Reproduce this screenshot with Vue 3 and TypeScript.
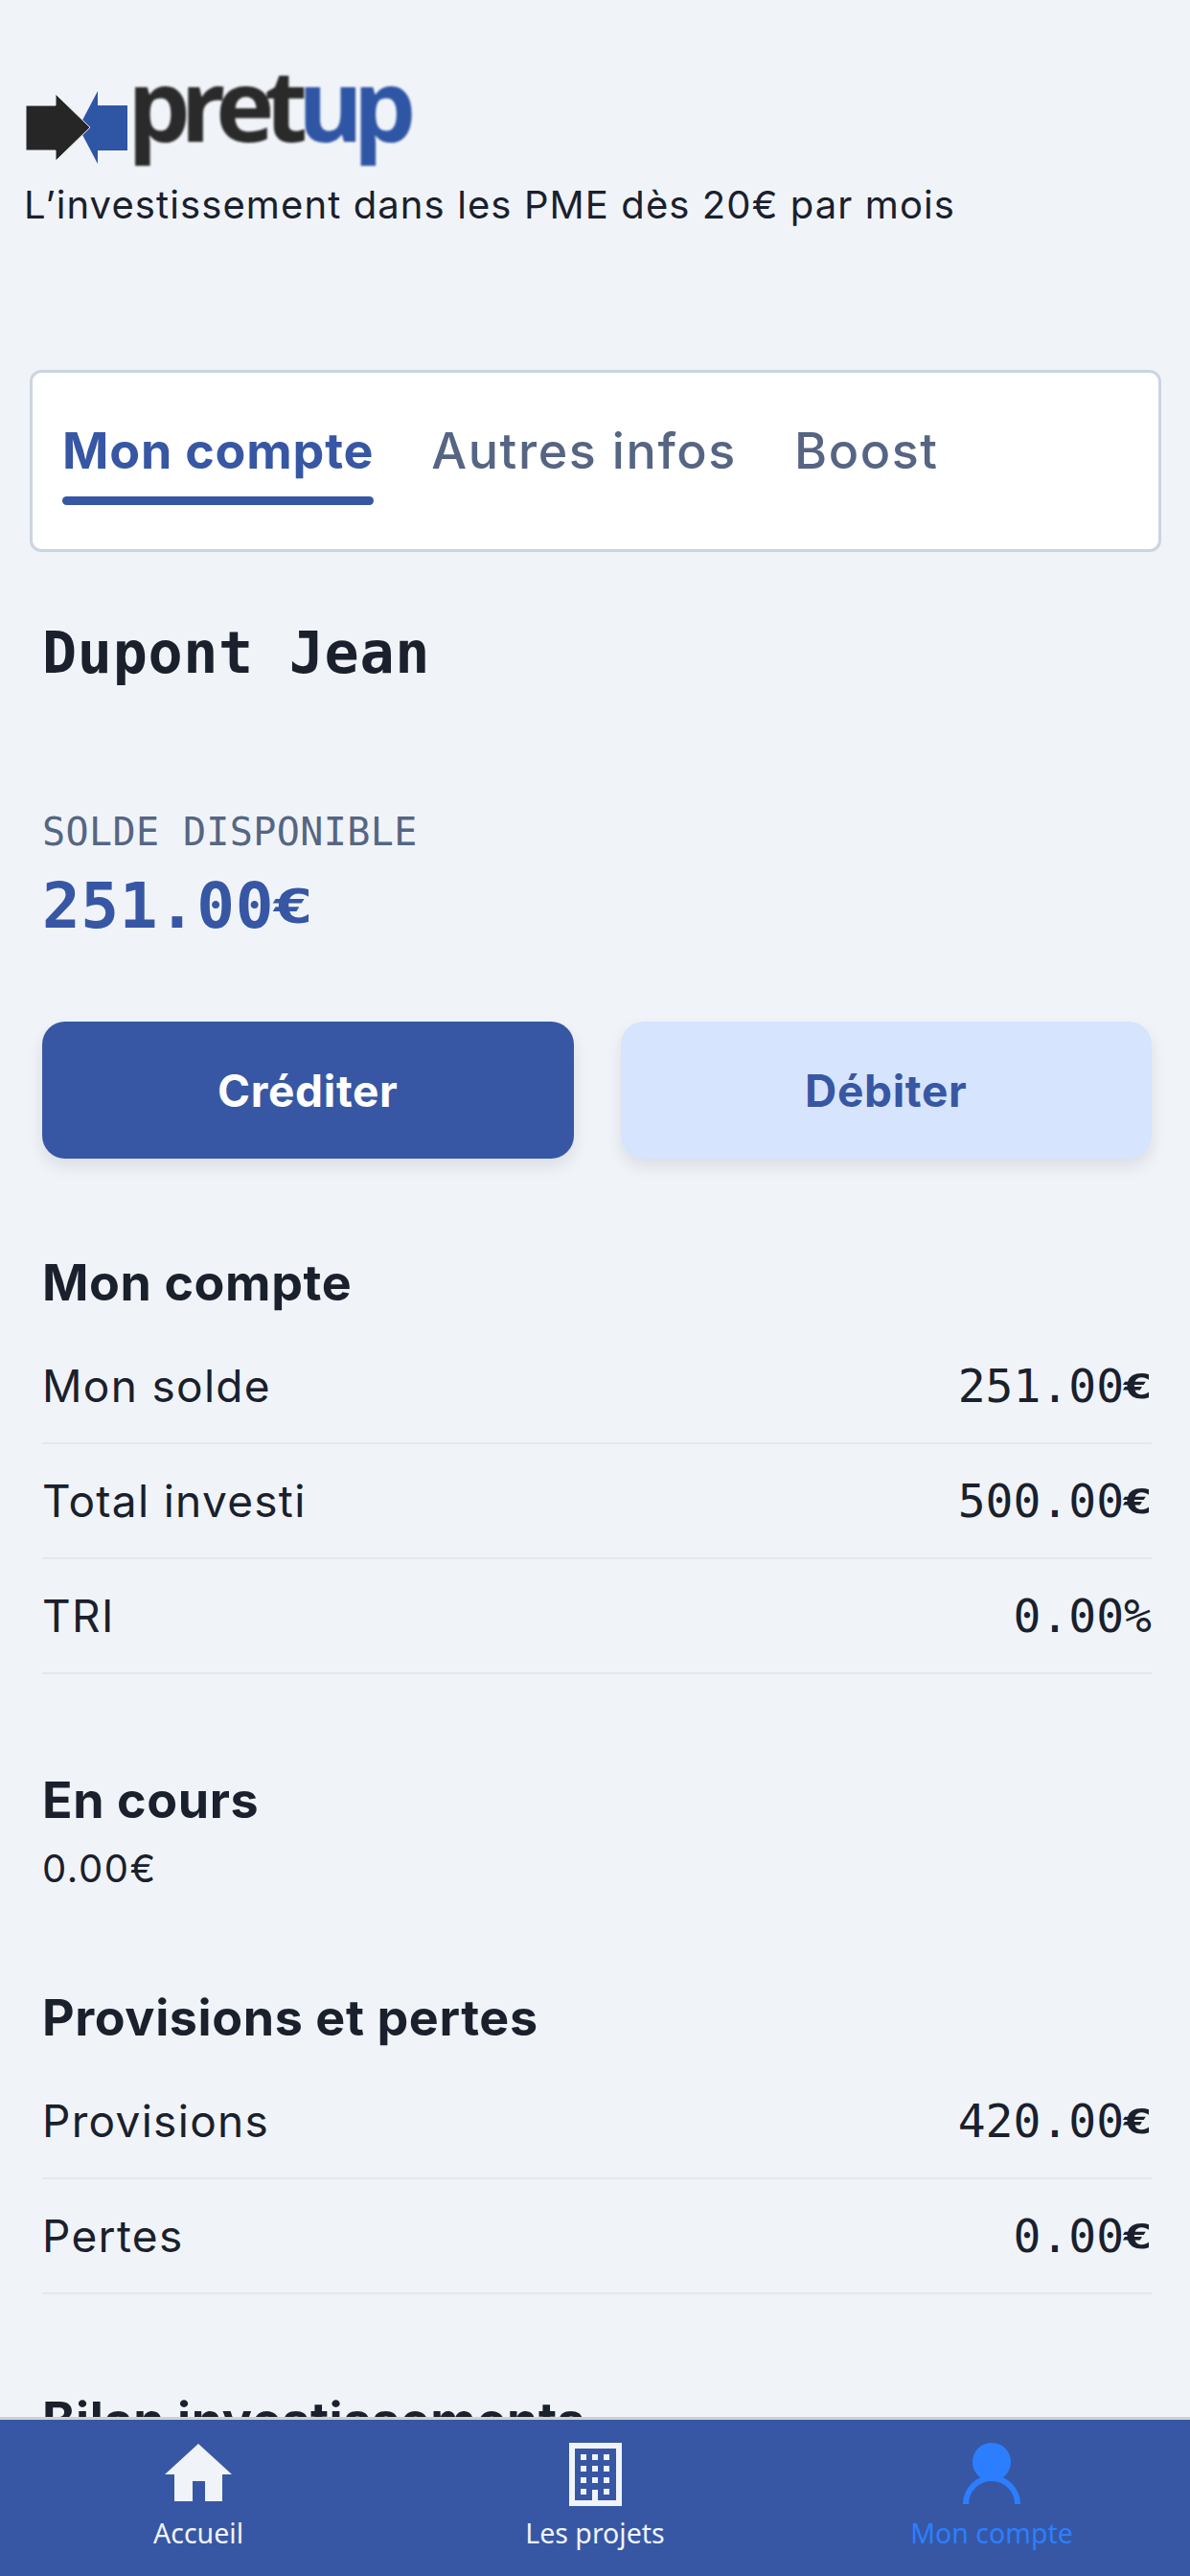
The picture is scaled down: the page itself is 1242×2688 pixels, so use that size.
<script setup lang="ts">
import { ref } from 'vue'

interface AccountRow {
  label: string
  amount: string
  unit: string
}

const tabs = ['Mon compte', 'Autres infos', 'Boost']
const activeTab = ref('Mon compte')

const accountRows: AccountRow[] = [
  { label: 'Mon solde', amount: '251.00', unit: '€' },
  { label: 'Total investi', amount: '500.00', unit: '€' },
  { label: 'TRI', amount: '0.00', unit: '%' },
]

const provisionRows: AccountRow[] = [
  { label: 'Provisions', amount: '420.00', unit: '€' },
  { label: 'Pertes', amount: '0.00', unit: '€' },
]

const windows = [
  [12, 12], [24, 12], [36, 12],
  [12, 24], [24, 24], [36, 24],
  [12, 36], [24, 36], [36, 36],
  [12, 48], [36, 48],
]
</script>

<template>
  <div class="page">
    <header class="brand">
      <div class="logo">
        <svg class="logo-arrows" width="106" height="76" viewBox="0 0 106 76">
          <path d="M106 15H75V0L55 38l20 38V62h31z" fill="#2f55a5" />
          <path d="M0 15h31V3l36 35-36 35V62H0z" fill="#262626" stroke="#f0f4f9" stroke-width="1" />
        </svg>
        <span class="logo-word">pret<span class="logo-up">up</span></span>
      </div>
      <p class="tagline">L’investissement dans les PME dès 20€ par mois</p>
    </header>

    <nav class="tabs">
      <a
        v-for="tab in tabs"
        :key="tab"
        class="tab"
        :class="{ active: tab === activeTab }"
        @click="activeTab = tab"
      >
        {{ tab }}
      </a>
    </nav>

    <main class="content">
      <h1 class="owner">Dupont Jean</h1>

      <p class="balance-label">SOLDE DISPONIBLE</p>
      <p class="balance-value">251.00<span class="unit">€</span></p>

      <div class="actions">
        <button type="button" class="btn btn-primary">Créditer</button>
        <button type="button" class="btn btn-soft">Débiter</button>
      </div>

      <h2 class="section-title first">Mon compte</h2>
      <ul class="rows">
        <li v-for="row in accountRows" :key="row.label" class="row">
          <span class="row-label">{{ row.label }}</span>
          <span class="row-value">{{ row.amount }}<span :class="{ unit: row.unit === '€' }">{{ row.unit }}</span></span>
        </li>
      </ul>

      <h2 class="section-title">En cours</h2>
      <p class="pending">0.00€</p>

      <h2 class="section-title">Provisions et pertes</h2>
      <ul class="rows">
        <li v-for="row in provisionRows" :key="row.label" class="row">
          <span class="row-label">{{ row.label }}</span>
          <span class="row-value">{{ row.amount }}<span class="unit">{{ row.unit }}</span></span>
        </li>
      </ul>

      <h2 class="section-title">Bilan investissements</h2>
    </main>

    <footer class="bottom-nav">
      <a class="nav-item">
        <span class="nav-icon">
          <svg class="icon-home" width="70" height="60" viewBox="0 0 70 60">
            <path d="M35 0l35 32H60v28H42V39H29v21H10V32H0z" fill="#f0f4f9" />
          </svg>
        </span>
        <span class="nav-label">Accueil</span>
      </a>
      <a class="nav-item">
        <span class="nav-icon">
          <svg width="55" height="66" viewBox="0 0 55 66">
            <rect x="3" y="3" width="49" height="60" fill="none" stroke="#f0f4f9" stroke-width="6" />
            <rect v-for="w in windows" :key="`${w[0]}-${w[1]}`" :x="w[0]" :y="w[1]" width="6" height="6" fill="#f0f4f9" />
            <rect x="24" y="49" width="6" height="12" fill="#f0f4f9" />
          </svg>
        </span>
        <span class="nav-label">Les projets</span>
      </a>
      <a class="nav-item current">
        <span class="nav-icon">
          <svg width="60" height="64" viewBox="0 0 60 64">
            <circle cx="30" cy="20" r="20" fill="#2b7fff" />
            <path d="M3 64a27 27 0 0 1 54 0" fill="none" stroke="#2b7fff" stroke-width="6" />
          </svg>
        </span>
        <span class="nav-label">Mon compte</span>
      </a>
    </footer>
  </div>
</template>

<style scoped>
.page {
  height: 100vh;
  overflow: hidden;
  background: #f0f4f9;
  color: #1a202c;
  font-family: Inter, 'Noto Sans', sans-serif;
}

.brand {
  padding: 73px 25px 0;
}

.logo {
  display: flex;
  align-items: flex-start;
  height: 100px;
  margin-left: 2px;
}

.logo-arrows {
  margin-top: 22px;
  filter: blur(0.6px);
}

.logo-word {
  margin: -15px 0 0 0;
  font-family: 'Open Sans', sans-serif;
  font-size: 104px;
  font-weight: 700;
  line-height: 100px;
  letter-spacing: -10.5px;
  color: #2a2a2a;
  filter: blur(0.9px);
}

.logo-up {
  color: #2f55a5;
}

.tagline {
  margin: 17px 0 0;
  font-size: 40px;
  line-height: 48px;
  letter-spacing: 1.1px;
}

.tabs {
  display: flex;
  gap: 60px;
  margin: 148px 30px 0 31px;
  padding: 50px 31px 46px;
  background: #fff;
  border: 3px solid #cbd5e0;
  border-radius: 12px;
}

.tab {
  display: block;
  font-size: 52px;
  font-weight: 500;
  line-height: 64px;
  letter-spacing: 1.6px;
  color: #566583;
  cursor: pointer;
}

.tab::after {
  content: '';
  display: block;
  height: 9px;
  margin-top: 15px;
  border-radius: 5px;
}

.tab.active {
  font-weight: 700;
  letter-spacing: 0.8px;
  color: #3757a4;
}

.tab.active::after {
  background: #3757a4;
}

.content {
  padding: 0 40px 0 44px;
}

.owner,
.balance-label,
.balance-value,
.row-value {
  font-family: 'DejaVu Sans Mono', monospace;
}

.owner {
  margin: 69px 0 0;
  font-size: 60px;
  font-weight: 700;
  line-height: 72px;
  letter-spacing: 0.7px;
}

.balance-label {
  margin: 127px 0 0;
  font-size: 40px;
  line-height: 48px;
  letter-spacing: 0.4px;
  color: #566583;
}

.balance-value {
  margin: 14px 0 0;
  font-size: 66px;
  font-weight: 700;
  line-height: 80px;
  letter-spacing: 0.6px;
  color: #3757a4;
}

/* the euro sign sits squat and wide, centred against the digits */
.unit {
  display: inline-block;
  font-weight: 700;
  line-height: 1;
  transform: scale(1.08, 0.75);
}

.actions {
  display: flex;
  gap: 49px;
  margin-top: 80px;
}

.btn {
  flex: 1;
  height: 143px;
  border: 0;
  border-radius: 24px;
  font-family: inherit;
  font-size: 46px;
  font-weight: 700;
  letter-spacing: 0.7px;
  box-shadow: 0 8px 16px rgba(26, 32, 44, 0.1);
}

.btn-primary {
  background: #3757a4;
  color: #fff;
}

.btn-soft {
  background: #d6e4fd;
  color: #3757a4;
}

.section-title {
  margin: 100px 0 0;
  font-size: 52px;
  font-weight: 700;
  line-height: 64px;
  letter-spacing: 0.6px;
}

.section-title.first {
  margin-top: 98px;
}

.rows {
  margin: 16px 0 0;
  padding: 0;
  list-style: none;
}

.row {
  display: flex;
  align-items: center;
  justify-content: space-between;
  box-sizing: border-box;
  height: 120px;
  border-bottom: 2px solid #e2e8f0;
}

.row-label {
  font-size: 46px;
  line-height: 56px;
  letter-spacing: 1.3px;
}

.row-value {
  font-size: 48px;
  line-height: 56px;
}

.pending {
  margin: 15px 0 0;
  font-size: 40px;
  line-height: 48px;
  letter-spacing: 1.6px;
}

.bottom-nav {
  position: fixed;
  left: 0;
  right: 0;
  bottom: 0;
  display: grid;
  grid-template-columns: repeat(3, 1fr);
  height: 163px;
  background: #3757a4;
  border-top: 3px solid #d0d0d0;
}

.nav-item {
  display: flex;
  flex-direction: column;
  align-items: center;
  padding-top: 24px;
  color: #f0f4f9;
  cursor: pointer;
}

.nav-item.current {
  color: #2b7fff;
}

.nav-icon {
  display: flex;
  height: 68px;
}

.icon-home {
  margin-top: 1px;
}

.nav-label {
  margin-top: 6px;
  font-family: 'Noto Sans', sans-serif;
  font-size: 28.5px;
  line-height: 40px;
}
</style>

<style>
html,
body {
  margin: 0;
  background: #f0f4f9;
}

p,
h1,
h2 {
  margin: 0;
}
</style>
